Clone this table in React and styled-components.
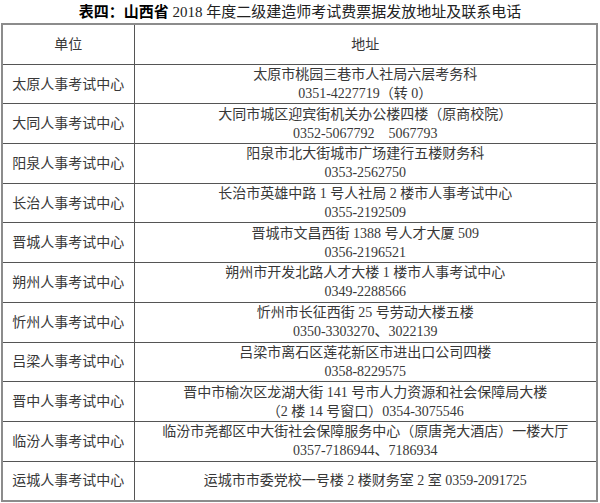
import styled, { createGlobalStyle } from "styled-components";

const GlobalStyle = createGlobalStyle`
  html, body {
    margin: 0;
    padding: 0;
    background: #fff;
  }
  body {
    font-family: "Liberation Serif", "Noto Sans CJK SC", serif;
    color: #333;
  }
`;

const Page = styled.div`
  width: 600px;
  height: 503px;
  overflow: hidden;
`;

const Title = styled.div`
  height: 22px;
  line-height: 22px;
  font-size: 15px;
  text-align: center;
  color: #222;
  padding-top: 1px;
`;

const Strong = styled.b`
  font-weight: 700;
  color: #000;
`;

const Table = styled.table`
  width: 597px;
  margin-left: 1px;
  border-collapse: collapse;
  table-layout: fixed;
  border: 2px solid #8c8c8c;
`;

const Cell = styled.td`
  height: 38.7px;
  padding: 0;
  border: 1px solid #555;
  text-align: center;
  vertical-align: middle;
  font-size: 14px;
  line-height: 19px;
  color: #383838;
`;

const Line = styled.div`
  white-space: nowrap;
`;

const rows = [
  ["太原人事考试中心", ["太原市桃园三巷市人社局六层考务科", "0351-4227719（转 0）"]],
  ["大同人事考试中心", ["大同市城区迎宾街机关办公楼四楼（原商校院）", "0352-5067792\u30005067793"]],
  ["阳泉人事考试中心", ["阳泉市北大街城市广场建行五楼财务科", "0353-2562750"]],
  ["长治人事考试中心", ["长治市英雄中路 1 号人社局 2 楼市人事考试中心", "0355-2192509"]],
  ["晋城人事考试中心", ["晋城市文昌西街 1388 号人才大厦 509", "0356-2196521"]],
  ["朔州人事考试中心", ["朔州市开发北路人才大楼 1 楼市人事考试中心", "0349-2288566"]],
  ["忻州人事考试中心", ["忻州市长征西街 25 号劳动大楼五楼", "0350-3303270、3022139"]],
  ["吕梁人事考试中心", ["吕梁市离石区莲花新区市进出口公司四楼", "0358-8229575"]],
  ["晋中人事考试中心", ["晋中市榆次区龙湖大街 141 号市人力资源和社会保障局大楼", "（2 楼 14 号窗口）0354-3075546"]],
  ["临汾人事考试中心", ["临汾市尧都区中大街社会保障服务中心（原唐尧大酒店）一楼大厅", "0357-7186944、7186934"]],
  ["运城人事考试中心", ["运城市市委党校一号楼 2 楼财务室 2 室 0359-2091725"]],
];

export default function App() {
  return (
    <Page>
      <GlobalStyle />
      <Title>
        <Strong>表四：山西省</Strong> 2018 年度二级建造师考试费票据发放地址及联系电话
      </Title>
      <Table>
        <colgroup>
          <col style={{ width: 132 }} />
          <col />
        </colgroup>
        <tbody>
          <tr>
            <Cell>单位</Cell>
            <Cell>地址</Cell>
          </tr>
          {rows.map(([unit, lines]) => (
            <tr key={unit}>
              <Cell>{unit}</Cell>
              <Cell>
                {lines.map((l) => (
                  <Line key={l}>{l}</Line>
                ))}
              </Cell>
            </tr>
          ))}
        </tbody>
      </Table>
    </Page>
  );
}
